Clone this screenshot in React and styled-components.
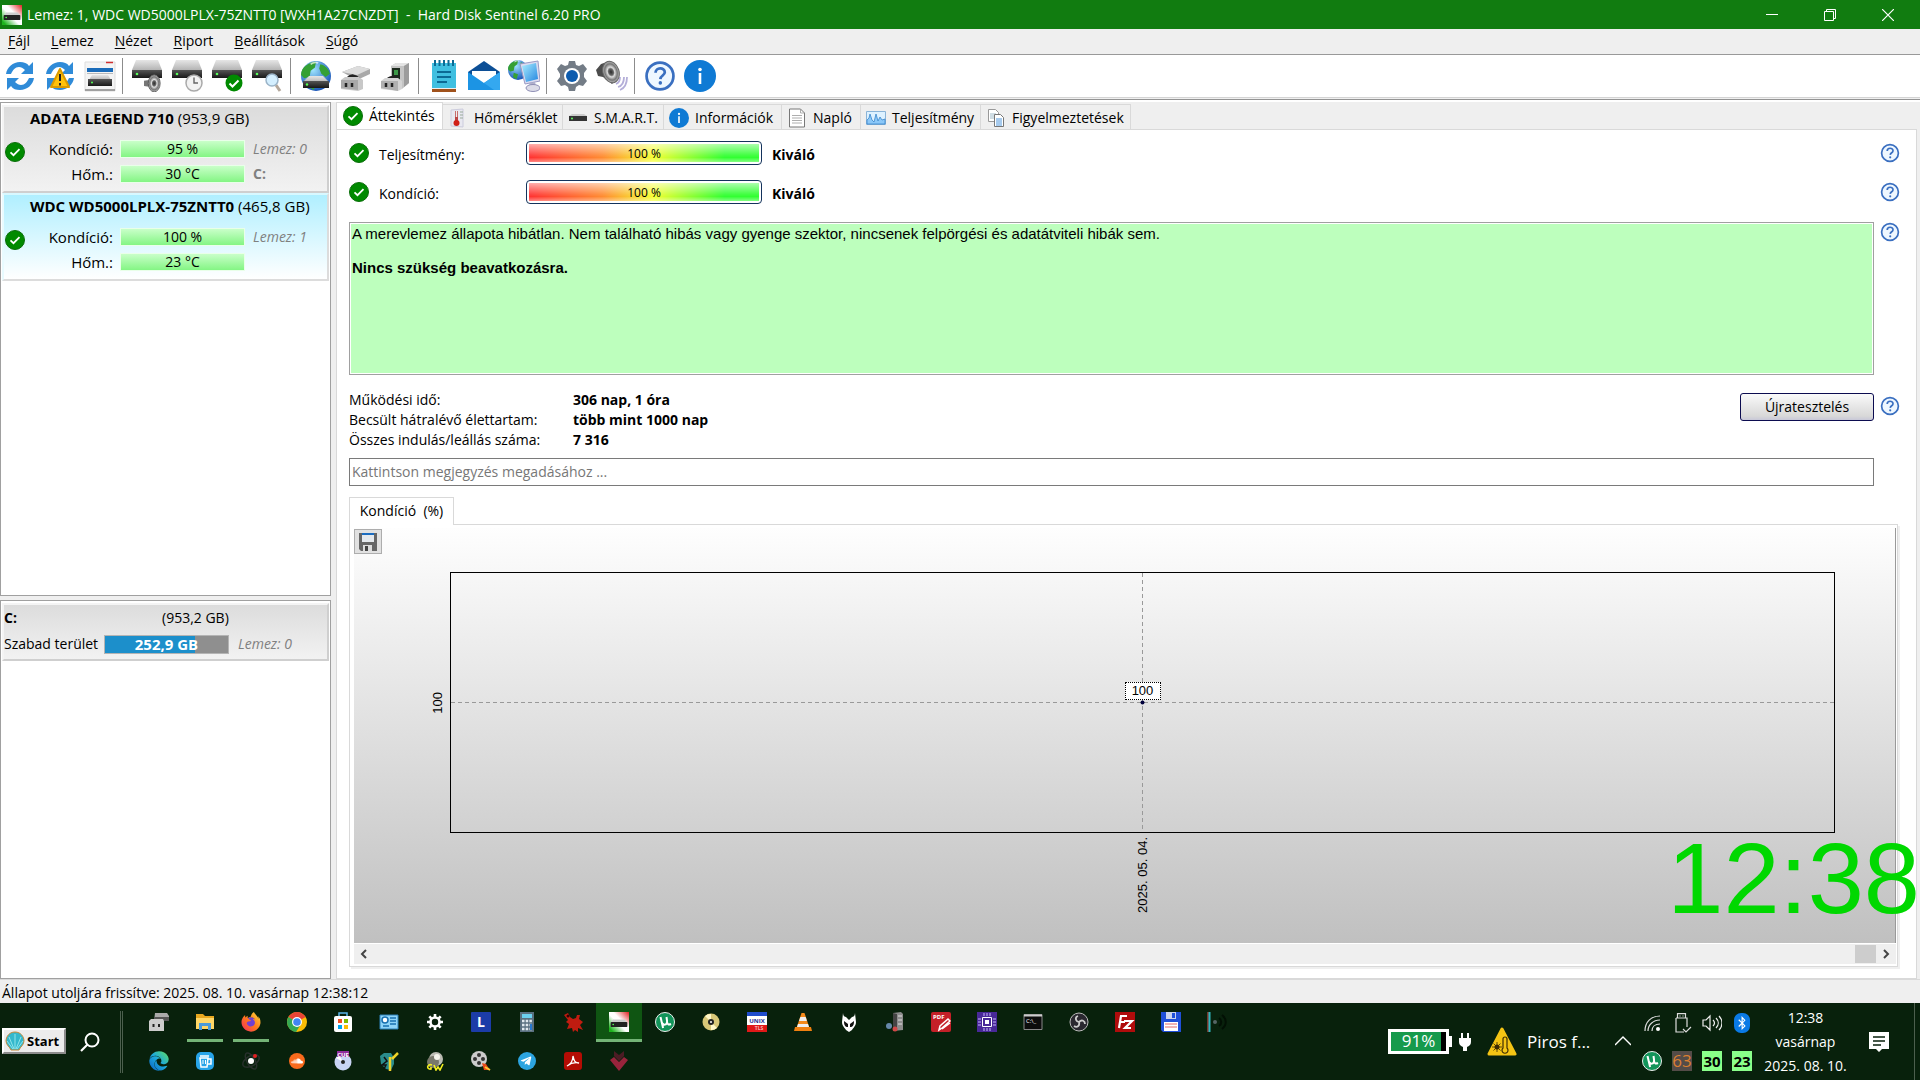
import React from 'react';
import styled, { createGlobalStyle, css } from 'styled-components';
import { FaBluetoothB, FaFirefoxBrowser, FaEdge, FaSoundcloud, FaTelegramPlane } from 'react-icons/fa';

const GlobalStyle = createGlobalStyle`
  * {
    box-sizing: border-box;
  }
  body {
    margin: 0;
    overflow: hidden;
    background: #efefef;
    color: #000;
    font-family: 'Open Sans', 'Noto Sans', sans-serif;
    font-size: 14px;
    line-height: 20px;
  }
  button, input {
    font: inherit;
    color: inherit;
    border: 0;
    margin: 0;
    padding: 0;
    background: none;
  }
  svg {
    display: block;
    flex: none;
  }
`;

const Window = styled.div`
  display: flex;
  flex-direction: column;
  min-height: 100vh;
`;

/* ---------- title, menu, toolbar ---------- */

const TitleBar = styled.header`
  display: flex;
  align-items: center;
  height: 29px;
  padding: 0 6px 0 2px;
  gap: 5px;
  background: #117c10;
  color: #fff;
`;

const Title = styled.h1`
  flex: 1;
  margin: 0;
  font-size: 14px;
  font-weight: 400;
  white-space: pre;
`;

const CaptionButton = styled.button`
  display: flex;
  align-items: center;
  justify-content: center;
  width: 53px;
  height: 29px;
`;

const MenuBar = styled.nav`
  display: flex;
  align-items: flex-start;
  height: 26px;
  padding: 2px 8px 0;
  gap: 21px;
  border-bottom: 1px solid #999;

  u {
    text-underline-offset: 2px;
  }
`;

const Toolbar = styled.div`
  display: flex;
  align-items: center;
  height: 43px;
  background: #fff;
  border-bottom: 1px solid #d4d4d4;
`;

const ToolbarEdge = styled.div`
  height: 3px;
  margin-top: 1px;
  border-top: 1px solid #949494;
  border-bottom: 2px solid #fff;
`;

const ToolButton = styled.button`
  display: flex;
  align-items: center;
  justify-content: center;
  width: 40px;
  height: 40px;
`;

const ToolSeparator = styled.span`
  width: 1px;
  height: 36px;
  margin: 0 5px 0 2px;
  background: #8c8c8c;
`;

/* ---------- left column ---------- */

const Main = styled.main`
  display: flex;
  flex: 1;
  gap: 5px;
`;

const Sidebar = styled.aside`
  display: flex;
  flex-direction: column;
  gap: 4px;
  width: 331px;
  flex: none;
`;

const SidePanel = styled.section`
  flex: ${({ $height }) => ($height ? `0 0 ${$height}px` : 1)};
  padding: 2px 1px;
  background: #fff;
  border: 1px solid #a0a0a0;
`;

const Card = styled.article`
  display: grid;
  grid-template-columns: 21px 81px 125px 1fr;
  grid-template-rows: 22px 7px 25px 25px;
  align-items: center;
  column-gap: 7px;
  height: 88px;
  border: 2px solid;
  border-color: #f4f4f4 #cfcfcf #cfcfcf #f4f4f4;
  background: linear-gradient(#dcdcdc, #f2f2f2);

  ${({ $selected }) =>
    $selected &&
    css`
      background: linear-gradient(#b0efff, #fff);
      border-color: #d8f8ff #dcdcdc #dcdcdc #e8fbff;
    `}
`;

const CardTitle = styled.h2`
  grid-column: 1 / -1;
  margin: 0;
  padding-left: 26px;
  font-size: 15px;
  font-weight: 400;
  white-space: nowrap;
`;

const CardState = styled.div`
  grid-row: 3;
  grid-column: 1;
  padding: 6px 0 0 1px;
`;

const CardLabel = styled.span`
  grid-column: 2;
  grid-row: ${({ $row }) => $row};
  font-size: 15px;
  text-align: right;
`;

const LevelBar = styled.span`
  grid-column: 3;
  grid-row: ${({ $row }) => $row};
  height: 18px;
  border: 1px solid #e9ffe9;
  background: linear-gradient(#c9ffc9, #84f584);
  line-height: 16px;
  text-align: center;
`;

const Muted = styled.span`
  grid-column: -2;
  grid-row: ${({ $row }) => $row};
  padding-left: 1px;
  color: #808080;
  font-style: ${({ $bold }) => ($bold ? 'normal' : 'italic')};
  font-weight: ${({ $bold }) => ($bold ? 700 : 400)};
`;

const VolumeCard = styled.article`
  display: grid;
  grid-template-columns: 92px 125px 1fr;
  grid-template-rows: 25px 28px;
  align-items: center;
  column-gap: 8px;
  height: 58px;
  border: 2px solid;
  border-color: #f4f4f4 #cfcfcf #cfcfcf #f4f4f4;
  background: linear-gradient(#dcdcdc, #f2f2f2);
  white-space: nowrap;
`;

const VolumeSize = styled.span`
  grid-column: 2 / -1;
  padding-left: 58px;
`;

const SpaceBar = styled.span`
  height: 19px;
  border: 1px solid #b4b4b4;
  background: linear-gradient(90deg, #1c8fcb 73%, #8f8f8f 73%);
  color: #fff;
  font-size: 15px;
  font-weight: 700;
  line-height: 17px;
  text-align: center;
`;

/* ---------- right pane ---------- */

const Pane = styled.section`
  display: flex;
  flex-direction: column;
  flex: 1;
  min-width: 0;
  margin-right: 3px;
`;

const TabList = styled.div`
  display: flex;
  align-items: flex-end;
  height: 28px;
  margin-bottom: -1px;
`;

const Tab = styled.button`
  display: flex;
  align-items: center;
  gap: 6px;
  width: ${({ $width }) => $width}px;
  height: 26px;
  padding: 1px 0 0 5px;
  border: 1px solid #d9d9d9;
  border-left: 0;
  background: #efefef;
  white-space: nowrap;

  &[aria-selected='true'] {
    height: 28px;
    padding: 0 0 2px 6px;
    border-left: 1px solid #d9d9d9;
    border-bottom: 0;
    background: #fff;
  }
`;

const TabPage = styled.div`
  display: flex;
  flex-direction: column;
  flex: 1;
  padding: 11px 16px 11px 12px;
  border: 1px solid #d9d9d9;
  background: #fff;
`;

const Row = styled.div`
  display: flex;
  gap: 6px;
  align-items: ${({ $top }) => ($top ? 'flex-start' : 'center')};
  margin-bottom: ${({ $gap }) => $gap}px;
`;

const RatingLabel = styled.span`
  width: 145px;
  padding: 3px 0 0 4px;
`;

const RatingBar = styled.div`
  width: 236px;
  height: 24px;
  padding: 2px;
  border: 1px solid #14335c;
  border-radius: 4px;

  span {
    display: block;
    height: 18px;
    background:
      linear-gradient(rgba(255, 255, 255, 0.6), rgba(255, 255, 255, 0.1) 60%, rgba(255, 255, 255, 0) 75%, rgba(255, 255, 255, 0.4)),
      linear-gradient(90deg, #ff3232, #ff8c32 32%, #f5ff32 54%, #32ff32 85%);
    font-size: 12px;
    line-height: 19px;
    text-align: center;
  }
`;

const Rating = styled.strong`
  flex: 1;
  padding: 3px 0 0 4px;
`;

const HelpButton = styled.button`
  width: 20px;
  height: 20px;
`;

const StatusText = styled.div`
  flex: 1;
  height: 153px;
  padding: 2px;
  border: 1px solid #a0a0a0;
  outline: 1px solid #fff;
  outline-offset: -2px;
  background: #bdffbd;
  font-family: 'Liberation Sans', Arial, sans-serif;
  font-size: 15px;
  line-height: 17px;

  p {
    margin: 0 0 17px;
  }
`;

const Stats = styled.dl`
  display: grid;
  grid-template-columns: 224px 1fr;
  grid-auto-rows: 20px;
  flex: 1;
  margin: 0;
  white-space: nowrap;

  dd {
    margin: 0;
    font-weight: 700;
  }
`;

const RetestButton = styled.button`
  width: 134px;
  height: 28px;
  margin-top: 3px;
  border: 1px solid #0c0c50;
  border-radius: 3px;
  background: linear-gradient(#fafafa, #d8d8d8 85%, #c8c8d8);
`;

const HelpInset = styled.div`
  padding-top: 6px;
`;

const NoteInput = styled.input`
  height: 28px;
  margin: 0 26px 11px 0;
  padding: 0 2px 2px;
  border: 1px solid #7a7a7a;

  &::placeholder {
    color: #777;
    opacity: 1;
  }
`;

const ChartTab = styled.button`
  position: relative;
  align-self: flex-start;
  height: 28px;
  width: 105px;
  margin-bottom: -1px;
  padding-bottom: 2px;
  border: 1px solid #d9d9d9;
  border-bottom: 0;
  background: #fff;
  white-space: pre;
`;

const ChartPanel = styled.div`
  display: flex;
  flex-direction: column;
  flex: 1;
  margin-right: 2px;
  padding: 3px 1px 2px 4px;
  border: 1px solid #d9d9d9;
  box-shadow: 2px 2px 0 #efefef;
`;

const Chart = styled.div`
  display: grid;
  grid-template-columns: 96px 1fr 60px;
  grid-template-rows: 44px 1fr 110px;
  flex: 1;
  border-right: 1px solid #999;
  background: linear-gradient(#fefefe, #c0c0c0);
  font-family: 'Liberation Sans', Arial, sans-serif;
  font-size: 13px;
  line-height: 16px;
`;

const SaveButton = styled.button`
  display: flex;
  align-items: center;
  justify-content: center;
  grid-column: 1 / -1;
  width: 28px;
  height: 25px;
  margin-top: 1px;
  border: 1px solid #adadad;
  background: #e1e1e1;
`;

const AxisLabel = styled.span`
  writing-mode: vertical-rl;
  transform: rotate(180deg);
  justify-self: ${({ $end }) => ($end ? 'end' : 'center')};
  align-self: ${({ $end }) => ($end ? 'center' : 'start')};
  margin: ${({ $end }) => ($end ? '0 4px 0 0' : '4px 0 0')};
`;

const Plot = styled.div`
  position: relative;
  display: flex;
  align-items: center;
  justify-content: center;
  border: 1px solid #000;

  > svg {
    position: absolute;
    inset: 0;
    overflow: visible;
  }
`;

const PointLabel = styled.span`
  position: relative;
  width: 36px;
  height: 18px;
  margin-bottom: 24px;
  border: 1px dotted #000;
  background: #fff;
  text-align: center;
`;

const ScrollBar = styled.div`
  display: flex;
  align-items: center;
  justify-content: space-between;
  height: 20px;
  margin-top: 1px;
  background: #efefef;
`;

const ScrollEnd = styled.div`
  display: flex;
  height: 18px;
`;

const ScrollButton = styled.button`
  display: flex;
  align-items: center;
  justify-content: center;
  width: 20px;
  height: 18px;
`;

const ScrollThumb = styled.div`
  width: 21px;
  background: #cdcdcd;
`;

const StatusBar = styled.footer`
  height: 24px;
  padding: 3px 2px 0;
  border-top: 1px solid #d9d9d9;
`;

const DesktopClock = styled.time`
  position: absolute;
  right: 0;
  bottom: 151px;
  color: #00d800;
  font: 101px/102px 'Liberation Sans', Arial, sans-serif;
`;

/* ---------- taskbar ---------- */

const Taskbar = styled.div`
  display: flex;
  align-items: center;
  height: 77px;
  background: #08210c;
  color: #fff;
`;

const StartButton = styled.button`
  display: flex;
  align-items: center;
  gap: 2px;
  width: 64px;
  height: 26px;
  margin: 0 0 2px 2px;
  padding-left: 1px;
  border: 2px solid;
  border-color: #fff #8c8c8c #8c8c8c #fff;
  background: #ececec;
  color: #000;
  font-size: 13px;
  font-weight: 700;
`;

const SearchButton = styled.button`
  margin: 0 20px 0 14px;
`;

const Grip = styled.span`
  width: 3px;
  height: 62px;
  margin-right: 13px;
  border: solid #4c5f4e;
  border-width: 0 1px;
`;

const Apps = styled.div`
  flex: 1;
  align-self: stretch;
`;

const AppRow = styled.div`
  display: flex;
  height: 39px;
`;

const AppButton = styled.button`
  display: flex;
  align-items: center;
  justify-content: center;
  width: 46px;
  height: 39px;
  padding-top: 2px;
  border-bottom: 3px solid transparent;

  ${({ $state }) =>
    $state === 'open' &&
    css`
      width: 36px;
      margin: 0 5px;
      border-color: #74b477;
    `}
  ${({ $state }) =>
    $state === 'active' &&
    css`
      background: #0f5512;
      border-color: #74b477;
    `}
`;

const Battery = styled.div`
  display: flex;
  justify-content: center;
  width: 61px;
  height: 25px;
  border: 3px solid #fff;
  background: linear-gradient(90deg, #169a4c 90%, #000 90%);
  font-size: 17px;
  line-height: 18px;
`;

const BatteryTip = styled.span`
  width: 3px;
  height: 11px;
  background: #fff;
`;

const Weather = styled.button`
  display: flex;
  align-items: center;
  gap: 10px;
  width: 128px;
  margin-left: 16px;
  font-size: 17px;
  white-space: nowrap;
`;

const TrayGrid = styled.div`
  display: grid;
  grid-template-columns: repeat(4, 30px);
  grid-template-rows: 38px 38px;
  place-items: center;
  margin-left: 6px;
`;

const TrayNumber = styled.span`
  width: 20px;
  height: 20px;
  background: ${({ $hot }) => ($hot ? '#544c48' : '#8aff8a')};
  color: ${({ $hot }) => ($hot ? '#dc8030' : '#000')};
  font-size: ${({ $hot }) => ($hot ? 17 : 15)}px;
  font-weight: ${({ $hot }) => ($hot ? 400 : 700)};
  text-align: center;
`;

const DateTime = styled.time`
  width: 97px;
  margin-right: 15px;
  line-height: 24px;
  text-align: center;
`;

const NoticeButton = styled.button`
  margin-right: 25px;
`;

const ShowDesktop = styled.button`
  align-self: stretch;
  width: 6px;
  border-left: 1px solid #4c5f4e;
`;

/* ---------- icons ---------- */

const Svg = ({ size = 32, box = 32, children, ...rest }) => (
  <svg width={size} height={size} viewBox={`0 0 ${box} ${box}`} fill="none" aria-hidden="true" {...rest}>
    {children}
  </svg>
);

const DefsSvg = styled.svg`
  position: absolute;
`;

const Gradients = () => (
  <DefsSvg width="0" height="0" aria-hidden="true">
    <defs>
      <linearGradient id="metal" x1="0" y1="0" x2="0" y2="1">
        <stop offset="0" stopColor="#e6e6e6" />
        <stop offset="1" stopColor="#b4b4b4" />
      </linearGradient>
      <linearGradient id="dark" x1="0" y1="0" x2="0" y2="1">
        <stop offset="0" stopColor="#555" />
        <stop offset="1" stopColor="#181818" />
      </linearGradient>
      <radialGradient id="ocean" cx=".4" cy=".3" r=".7">
        <stop offset="0" stopColor="#9ee4ff" />
        <stop offset="1" stopColor="#1a56b8" />
      </radialGradient>
      <linearGradient id="sky" x1="0" y1="0" x2="1" y2="1">
        <stop offset="0" stopColor="#aef" />
        <stop offset="1" stopColor="#2486e0" />
      </linearGradient>
      <linearGradient id="flag" x1="0" y1="1" x2="1" y2="0">
        <stop offset=".1" stopColor="#1eb41e" />
        <stop offset=".45" stopColor="#fff" />
        <stop offset=".6" stopColor="#fff" />
        <stop offset="1" stopColor="#e02020" />
      </linearGradient>
      <radialGradient id="speaker">
        <stop offset="0" stopColor="#2a2a2a" />
        <stop offset=".3" stopColor="#666" />
        <stop offset=".45" stopColor="#ddd" />
        <stop offset=".75" stopColor="#777" />
        <stop offset="1" stopColor="#bbb" />
      </radialGradient>
      <linearGradient id="fire" x1="0" y1="1" x2="1" y2="0">
        <stop offset="0" stopColor="#f02860" />
        <stop offset=".5" stopColor="#ff7a1a" />
        <stop offset="1" stopColor="#ffe040" />
      </linearGradient>
      <linearGradient id="edge" x1="0" y1="1" x2="1" y2="0">
        <stop offset="0" stopColor="#0a62c4" />
        <stop offset=".5" stopColor="#1ca8dc" />
        <stop offset="1" stopColor="#60e060" />
      </linearGradient>
    </defs>
  </DefsSvg>
);

const DriveShape = ({ transform }) => (
  <g transform={transform}>
    <path d="M4 0h22l4 10H0z" fill="url(#metal)" />
    <path d="M0 10h30v8H0z" fill="url(#dark)" />
    <circle cx="5" cy="14" r="1.3" fill="#5dff5d" />
  </g>
);

const SentinelIcon = ({ size = 20 }) => (
  <Svg size={size} box={24}>
    <path d="M0 0h24v24H0z" fill="url(#flag)" />
    <path d="M5 9h14l3 4H2z" fill="#ccc" />
    <rect x="2" y="12" width="20" height="6" rx="1" fill="#222" />
    <circle cx="5" cy="15" r="1" fill="#5f5" />
  </Svg>
);

const CheckIcon = ({ size = 20 }) => (
  <Svg size={size} box={20}>
    <circle cx="10" cy="10" r="9.5" fill="#008a00" stroke="#0a6e0a" />
    <path d="M5.5 10.3l3 2.9 6-6" stroke="#fff" strokeWidth="1.8" />
  </Svg>
);

const InfoIcon = ({ size = 32 }) => (
  <Svg size={size}>
    <circle cx="16" cy="16" r="16" fill="#0f7ad4" />
    <circle cx="16" cy="9.5" r="1.8" fill="#fff" />
    <path d="M16 13v11" stroke="#fff" strokeWidth="2.6" />
  </Svg>
);

const QuestionIcon = ({ size = 20 }) => (
  <Svg size={size} box={20}>
    <circle cx="10" cy="10" r="8.4" fill="#eef7ff" stroke="#3a6fc0" strokeWidth="1.7" />
    <path d="M7.2 8c0-3.6 5.8-3.6 5.8-.3 0 2-2.6 2-2.8 4.2" stroke="#3a6fc0" strokeWidth="1.7" />
    <circle cx="10.2" cy="14.3" r="1.1" fill="#3a6fc0" />
  </Svg>
);

const ARROW = 'M2 14C3 7 9 2 16 2c4 0 7 1 9 4l4-4v12H17l4-4c-2-2-4-3-6-3-4 0-6 3-8 7z';

const RefreshArrows = () => (
  <>
    <path d={ARROW} fill="#2f8bd8" />
    <path d={ARROW} fill="#2f8bd8" transform="rotate(180 16 16)" />
  </>
);

const RefreshIcon = () => (
  <Svg>
    <RefreshArrows />
  </Svg>
);

const RefreshWarnIcon = () => (
  <Svg>
    <RefreshArrows />
    <path d="M16 9L25 27H7z" fill="#ffc20a" stroke="#d99a00" strokeLinejoin="round" strokeWidth="2" />
    <path d="M16 14v7M16 23v2.4" stroke="#222" strokeWidth="2" />
  </Svg>
);

const ReportIcon = () => (
  <Svg>
    <path d="M1 2h30v29H1z" fill="#f4f4f4" stroke="#ddd" />
    <path d="M22 2.500h7" stroke="#d03030" strokeWidth="1.500" />
    <path d="M3 10h26" stroke="#1a6cba" strokeWidth="4" />
    <path d="M3 13.500h26" stroke="#bbb" />
    <path d="M8 15h16l3 5H5z" fill="url(#metal)" />
    <path d="M4 19h24v7H4z" fill="url(#dark)" />
    <circle cx="8" cy="22.500" r="1" fill="#5f5" />
    <path d="M1 30h30" stroke="#888" strokeWidth="1.500" />
  </Svg>
);

const SpeakerShape = ({ transform }) => (
  <g transform={transform}>
    <path d="M0 8l6-1 5-6v20l-5-6-6-1z" fill="#777" />
    <ellipse cx="12" cy="11" rx="7" ry="10" fill="url(#speaker)" stroke="#555" />
  </g>
);

const DriveSoundIcon = () => (
  <Svg>
    <DriveShape />
    <SpeakerShape transform="translate(12 14) scale(.85)" />
  </Svg>
);

const DriveClockIcon = () => (
  <Svg>
    <DriveShape />
    <circle cx="22" cy="23" r="8" fill="#f2f2f2" stroke="#aaa" strokeWidth="1.500" />
    <path d="M22 17.500V23h4" stroke="#666" strokeWidth="1.400" />
  </Svg>
);

const DriveCheckIcon = () => (
  <Svg>
    <DriveShape />
    <circle cx="22" cy="23" r="8.500" fill="#008a00" />
    <path d="M17.500 23.500l3 3 6-6" stroke="#fff" strokeWidth="2" />
  </Svg>
);

const DriveSearchIcon = () => (
  <Svg>
    <DriveShape />
    <path d="M24 25l4 6" stroke="#b4a89c" strokeWidth="3" />
    <circle cx="20" cy="20" r="6" fill="#d4efff" stroke="#9bb4c8" strokeWidth="1.500" />
  </Svg>
);

const GlobeShape = ({ cx = 16, cy = 15, r = 14 }) => (
  <g transform={`translate(${cx - r} ${cy - r}) scale(${r / 14})`}>
    <circle cx="14" cy="14" r="14" fill="url(#ocean)" />
    <path d="M5 4c4-3 8-4 9-3l-1 5-4 3-1 6-5 1-3-3c0-4 2-7 5-9zM18 3c5 1 8 5 9 9l-4 3-4-3-2-5zM8 18l6 2-2 7-5-3z" fill="#35a034" />
    <path d="M9 3c3-2 6-2 7-1" stroke="#fff" strokeWidth="1.500" opacity=".7" />
  </g>
);

const GlobeDriveIcon = () => (
  <Svg>
    <GlobeShape cx={16} cy={16} r={15} />
    <path d="M9 16h14l6 6H3z" fill="url(#metal)" />
    <path d="M3 21h26v7H3z" fill="url(#dark)" />
    <circle cx="7" cy="24.500" r="1.200" fill="#5f5" />
  </Svg>
);

const DriveDockIcon = () => (
  <Svg>
    <path d="M2 12L18 6l12 3v5l-13 6z" fill="#a9a9a9" />
    <path d="M2 12L18 6l12 3-13 6z" fill="#ddd" />
    <path d="M8 18c3-3 7-3 11 1" stroke="#222" strokeWidth="3" />
    <path d="M1 20l4-3h14l4 3v9l-5 2-17-2z" fill="#c8c8c8" />
    <path d="M1 20h17v10L1 28z" fill="#a8a8a8" />
    <path d="M6 23v4M12 23v4" stroke="#222" strokeWidth="2.500" />
  </Svg>
);

const DriveStandIcon = () => (
  <Svg>
    <path d="M11 6l5-3h13v20l-7 6H11z" fill="#c4c4c4" />
    <path d="M11 6l5-3h13l-5 3z" fill="#e4e4e4" />
    <path d="M24 6l5-3v20l-5 4z" fill="#9c9c9c" />
    <path d="M12 8h8v12h-8z" fill="#1c2a1e" />
    <path d="M14 10h4v5h-4z" fill="#3c9a48" />
    <path d="M7 20c1-3 5-4 9-2" stroke="#222" strokeWidth="2" />
    <path d="M1 21l4-3h13l4 3v8l-4 2-17-2z" fill="#d4d4d4" />
    <path d="M1 21h17v10L1 28z" fill="#b0b0b0" />
    <path d="M6 23v4M12 23v4" stroke="#222" strokeWidth="2.500" />
  </Svg>
);

const NotepadIcon = () => (
  <Svg>
    <path d="M4 3h24v26H4z" fill="#40bfe0" />
    <path d="M4 29h24v3H4z" fill="#a0521c" />
    <path d="M4 28.500h24" stroke="#eee" />
    <path d="M7 0v6M11.500 0v6M16 0v6M20.500 0v6M25 0v6" stroke="#0b6a94" strokeWidth="2" />
    <path d="M9 12h14M9 17h14M9 22h10" stroke="#0b6a94" strokeWidth="2" />
  </Svg>
);

const MailIcon = () => (
  <Svg>
    <path d="M0 12L16 1l16 11v3H0z" fill="#0d4f96" />
    <path d="M4 11h24v8l-12 6-12-6z" fill="#fff" />
    <path d="M0 12l16 11 16-11v18H0z" fill="#1c94e4" />
    <path d="M16 23L32 12v18H26z" fill="#34a8f0" />
  </Svg>
);

const NetworkIcon = () => (
  <Svg>
    <GlobeShape cx={10} cy={10} r={10} />
    <path d="M12 4l18-3 2 20-15 3z" fill="#dcdcf0" stroke="#9a9ac4" />
    <path d="M14 6l14-3 2 16-12 3z" fill="url(#sky)" />
    <path d="M21 23l6-1 1 4h-6z" fill="#b0b0cc" />
    <ellipse cx="25" cy="28" rx="7" ry="3.500" fill="#dcdce8" stroke="#8e8eb4" />
  </Svg>
);

const GearIcon = () => (
  <Svg>
    <path
      d="M13 1h6l1 4 3 1 4-2 4 5-3 4v4l3 4-4 5-4-1-3 2-1 4h-6l-1-4-3-2-4 1-4-5 3-4v-3L1 9l4-5 4 2 3-1z"
      fill="#737c86"
    />
    <circle cx="16" cy="16" r="8" fill="#fff" />
    <circle cx="16" cy="16" r="6" fill="#0d5cae" />
  </Svg>
);

const SoundIcon = () => (
  <Svg>
    <path d="M22 27c4-1 6-5 6-10M24 30c5-2 7-7 7-13M20 24c3-1 4-3 4-7" stroke="#b4aed8" strokeWidth="1.800" />
    <path d="M0 10l5-6 9-3 5 20-3 3-9-7-5-1z" fill="#4c4c4c" />
    <ellipse cx="15" cy="12" rx="8" ry="11" transform="rotate(-18 15 12)" fill="url(#speaker)" stroke="#666" />
  </Svg>
);

const ThermometerIcon = () => (
  <Svg size={20} box={20}>
    <path d="M3 2l12-1v18l-12-1z" fill="#e8e8f0" stroke="#ccd" />
    <path d="M8.500 3v11" stroke="#b44" strokeWidth="3" />
    <path d="M8.500 3v6" stroke="#eee" strokeWidth="1.500" />
    <circle cx="8.500" cy="15" r="3" fill="#d02018" />
    <path d="M12 4h3M12 7h3M12 10h3" stroke="#9a9" />
  </Svg>
);

const SmartIcon = () => (
  <Svg size={20} box={20}>
    <path d="M4 6h12l3 2H1z" fill="#ccc" />
    <rect x="1" y="8" width="18" height="5" fill="#333" />
    <circle cx="4" cy="10.500" r="1" fill="#6f6" />
  </Svg>
);

const PageIcon = () => (
  <Svg size={20} box={20}>
    <path d="M2.500 1h11l4 4v14h-15z" fill="#fff" stroke="#777" />
    <path d="M13.500 1v4h4M5 7.500h10M5 10h10M5 12.500h10M5 15h10" stroke="#999" strokeWidth=".8" />
  </Svg>
);

const WaveIcon = () => (
  <Svg size={20} box={20}>
    <path d="M.5 3.500h19v13H.5z" fill="#ddf1ff" stroke="#8ab4d8" />
    <path d="M1 16v-4l2-2 1-4 2 6 2 2 2-8 2 7 2-4 2 3 3-1v5z" fill="#8cc8f8" stroke="#3a86cc" strokeWidth=".8" />
  </Svg>
);

const PagesIcon = () => (
  <Svg size={20} box={20}>
    <path d="M2.500 1.500h7l3 3v9h-10z" fill="#fff" stroke="#999" />
    <path d="M4 6h6M4 8h6M4 10h6" stroke="#8ab" strokeWidth=".8" />
    <path d="M8.500 6.500h6l3 3v9h-9z" fill="#fff" stroke="#777" />
    <path d="M10 11h6M10 13h6M10 15h6M10 17h6" stroke="#3a8ad8" strokeWidth=".9" />
  </Svg>
);

const FloppyIcon = () => (
  <Svg size={18} box={18}>
    <path d="M0 0h18v18H2l-2-2z" fill="#666" />
    <path d="M3 0h12v9H3z" fill="#e4e8ec" />
    <path d="M3 0h12v2H3z" fill="#1a6cc0" />
    <path d="M4 12h9v6H4z" fill="#ddd" />
    <path d="M6 13h3v5H6z" fill="#444" />
  </Svg>
);

const UTorrentIcon = () => (
  <Svg size={20} box={20}>
    <circle cx="10" cy="10" r="9.500" fill="#12945a" stroke="#eee" />
    <path d="M5.500 5l2.600 11M6.300 8.500c1 6 6.500 5 5.700 0L11.500 5M12 10c.5 3 2 3 4 2" stroke="#fff" strokeWidth="2" />
  </Svg>
);

const Tile = ({ fill, text, color = '#fff', size = 12 }) => (
  <Svg size={20} box={20}>
    <rect width="20" height="20" rx="1" fill={fill} />
    <text x="10" y="15" textAnchor="middle" fontSize={size} fontWeight="700" fill={color}>
      {text}
    </text>
  </Svg>
);

const Icon20 = ({ children }) => (
  <Svg size={20} box={20}>
    {children}
  </Svg>
);

const PlugIcon = styled.svg`
  margin-left: 7px;
`;

/* ---------- data ---------- */

const MENU = ['Fájl', 'Lemez', 'Nézet', 'Riport', 'Beállítások', 'Súgó'];

const TOOL_GROUPS = [
  [
    ['Frissítés', <RefreshIcon />],
    ['Figyelmeztetés', <RefreshWarnIcon />],
    ['Riport', <ReportIcon />],
  ],
  [
    ['Hang', <DriveSoundIcon />],
    ['Időzítés', <DriveClockIcon />],
    ['Teszt', <DriveCheckIcon />],
    ['Keresés', <DriveSearchIcon />],
  ],
  [
    ['Hálózati lemez', <GlobeDriveIcon />],
    ['Dokkoló', <DriveDockIcon />],
    ['Állvány', <DriveStandIcon />],
  ],
  [
    ['Jegyzet', <NotepadIcon />],
    ['Levél', <MailIcon />],
    ['Hálózat', <NetworkIcon />],
  ],
  [
    ['Beállítások', <GearIcon />],
    ['Hangok', <SoundIcon />],
  ],
  [
    ['Súgó', <QuestionIcon size={32} />],
    ['Névjegy', <InfoIcon />],
  ],
];

const TABS = [
  ['Áttekintés', 107, <CheckIcon />],
  ['Hőmérséklet', 120, <ThermometerIcon />],
  ['S.M.A.R.T.', 101, <SmartIcon />],
  ['Információk', 118, <InfoIcon size={20} />],
  ['Napló', 79, <PageIcon />],
  ['Teljesítmény', 120, <WaveIcon />],
  ['Figyelmeztetések', 150, <PagesIcon />],
];

const DISKS = [
  { name: 'ADATA LEGEND 710', size: '953,9 GB', health: '95 %', temp: '30 °C', index: 0, volume: 'C:' },
  { name: 'WDC WD5000LPLX-75ZNTT0', size: '465,8 GB', health: '100 %', temp: '23 °C', index: 1, selected: true },
];

const RATINGS = [
  ['Teljesítmény:', '100 %', 15],
  ['Kondíció:', '100 %', 18],
];

const TOP_APPS = [
  ['Dokk', <Icon20><path d="M6 1h12l2 3v5H5z" fill="#aaa" /><path d="M5 5h15v4H5z" fill="#555" /><path d="M0 9l2-2h12l1 2v10H0z" fill="#ccc" /><path d="M4.500 12v3M10 12v3" stroke="#222" strokeWidth="2" /></Icon20>],
  ['Fájlkezelő', <Icon20><path d="M1 2h7l2 2h9v13H1z" fill="#e8a820" /><path d="M1 6h18v11H1z" fill="#ffd766" /><path d="M4 18v-7h12v7h-3v-4H7v4z" fill="#4a9ad8" /></Icon20>, 'open'],
  ['Firefox', <Icon20><circle cx="10" cy="11" r="6" fill="#7040d0" /><g transform="scale(.039)" fill="url(#fire)"><FaFirefoxBrowser size={512} fill="url(#fire)" /></g></Icon20>, 'open'],
  ['Chrome', <Icon20><circle cx="10" cy="10" r="10" fill="#fbbc05" /><path d="M10 10L1.400 5a10 10 0 0 1 17.200 0z" fill="#ea4335" /><path d="M10 10L1.400 5A10 10 0 0 0 9 20l5-8z" fill="#34a853" /><circle cx="10" cy="10" r="5" fill="#fff" /><circle cx="10" cy="10" r="3.800" fill="#4285f4" /></Icon20>],
  ['Store', <Icon20><path d="M6 5V1h8v4" stroke="#5ab4e8" strokeWidth="1.500" /><rect x="1" y="4" width="18" height="16" rx="2" fill="#fff" /><path d="M5 7h4v4H5z" fill="#f25022" /><path d="M11 7h4v4h-4z" fill="#7fba00" /><path d="M5 13h4v4H5z" fill="#00a4ef" /><path d="M11 13h4v4h-4z" fill="#ffb900" /></Icon20>],
  ['Vezérlőpult', <Icon20><path d="M1 3h18v14H1z" fill="#8ed4f8" stroke="#2a80b8" /><circle cx="6" cy="8" r="3" fill="#fff" stroke="#1870b0" strokeWidth="1.500" /><path d="M11 6h6M11 9h6M11 12h6M4 14h6" stroke="#1870b0" strokeWidth="1.500" /></Icon20>],
  ['Gépház', <Icon20><circle cx="10" cy="10" r="4.500" stroke="#fff" strokeWidth="2.600" /><path d="M10 2v3M10 15v3M2 10h3M15 10h3M4.300 4.300l2 2M13.700 13.700l2 2M15.700 4.300l-2 2M6.300 13.700l-2 2" stroke="#fff" strokeWidth="2.600" /></Icon20>],
  ['L', <Tile fill="#1c3ca8" text="L" size={14} />],
  ['Számológép', <Icon20><path d="M3 0h14v20H3z" fill="#5a7080" /><path d="M5 2h10v4H5z" fill="#6cd0f0" /><path d="M5 9h10M5 13h10M5 17h10" stroke="#e0e8ee" strokeWidth="2.500" strokeDasharray="2.500 1.200" /><path d="M14 12v6" stroke="#2878d0" strokeWidth="2" /></Icon20>],
  ['IrfanView', <Icon20><path d="M1 3l4-2 2 4 3 2 3-1 1-3 3 0-1 4 4 3-3 3 3 5-5-2 0 4-3-2-2 2-1-4-5 1 2-5-3-2 2-2z" fill="#c01c10" /><circle cx="5" cy="4" r="1.500" fill="#300" /></Icon20>],
  ['Hard Disk Sentinel', <SentinelIcon />, 'active'],
  ['uTorrent', <UTorrentIcon />],
  ['Lemez', <Icon20><circle cx="10" cy="10" r="8.500" fill="#d8c878" /><path d="M10 10L4 4a8 8 0 0 1 6-2z" fill="#fff8c8" /><path d="M10 10l6 6a8 8 0 0 1-6 2z" fill="#fff8c8" /><circle cx="10" cy="10" r="3" fill="#222" /><circle cx="10" cy="10" r="1" fill="#fff" /></Icon20>],
  ['Unix', <Icon20><path d="M0 0h20v20H0z" fill="#fff" /><path d="M0 0h20v4H0z" fill="#1e4ccc" /><path d="M0 13h20v7H0z" fill="#e01818" /><text x="10" y="11" textAnchor="middle" fontSize="6" fontWeight="700" fill="#1a2c90">UNIX</text><text x="12" y="18" textAnchor="middle" fontSize="5" fontWeight="700" fill="#f8b0b0">TLS</text></Icon20>],
  ['VLC', <Icon20><path d="M8.500 1h3l5 15h-13z" fill="#f58a1a" /><path d="M7.300 5h5.400l1.200 4H6z" fill="#eee" /><path d="M5 12h10l1 3H4z" fill="#eee" /><path d="M2 15h16l1 4H1z" fill="#f08010" /></Icon20>],
  ['foobar2000', <Icon20><path d="M4 1c0 3 2 4 3 4l3 3 3-3c1 0 3-1 3-4l1 9c0 4-3 6-4 8l-3 2-3-2c-1-2-4-4-4-8z" fill="#fff" /><path d="M5 9l4 3v3c-3 0-4-2-4-6zM15 9l-4 3v3c3 0 4-2 4-6z" fill="#111" /></Icon20>],
  ['Szerver', <Icon20><path d="M8 1l8-1 2 2v16l-10 1z" fill="#8c8c8c" /><path d="M8 1l4 1v17l-4-1z" fill="#444" /><path d="M13 4h4M13 8h4M13 12h4" stroke="#ddd" /><circle cx="4" cy="14" r="3" fill="#68a" /><circle cx="10" cy="17" r="2.500" fill="#d04848" /></Icon20>],
  ['PDF', <Icon20><rect width="20" height="20" rx="2" fill="#c42028" /><text x="2" y="7" fontSize="6" fontWeight="700" fill="#fff">PDF</text><path d="M8 18l1-4 8-7 2 2-8 7zM11 17l8-6" stroke="#fff" strokeWidth="1.500" /></Icon20>],
  ['CPU-Z', <Icon20><path d="M0 0h20v20H0z" fill="#482898" /><path d="M5.500 5.500h9v9h-9z" stroke="#fff" /><path d="M8 8h4v4H8z" fill="#fff" /><path d="M7 1v3M10 1v3M13 1v3M7 16v3M10 16v3M13 16v3M1 7h3M1 10h3M1 13h3M16 7h3M16 10h3M16 13h3" stroke="#c8b4ff" /></Icon20>],
  ['Parancssor', <Icon20><path d="M1 2.500h18v15H1z" fill="#0c0c0c" stroke="#888" /><path d="M1 3.500h18" stroke="#ccc" strokeWidth="2" /><text x="3" y="11" fontSize="6" fill="#fff">C:\_</text></Icon20>],
  ['OBS', <Icon20><circle cx="10" cy="10" r="9" fill="#2a2830" stroke="#bbb" /><path d="M10 10c-4-1-4-5-1-6M10 10c3-3 6-1 6 2M10 10c1 4-2 6-5 4" stroke="#ccc" strokeWidth="1.800" /></Icon20>],
  ['FileZilla', <Icon20><path d="M0 0h20v20H0z" fill="#b00c0c" /><path d="M12 4H6L4 16M5 10h5M9 9h8l-7 7h6" stroke="#fff" strokeWidth="2.200" /></Icon20>],
  ['Total Commander', <Icon20><path d="M0 0h20v20H2l-2-2z" fill="#2050d8" /><path d="M5 0h10v7H5z" fill="#ccd4ec" /><path d="M11 1h3v5h-3z" fill="#2050d8" /><path d="M3 10h14v9H3z" fill="#fff" /><path d="M4 12h12M4 15h12" stroke="#e06868" /></Icon20>],
  ['Hang', <Icon20><path d="M1 0v20" stroke="#e05050" /><path d="M2.500 0v20" stroke="#30b8c0" strokeWidth="2" /><circle cx="8" cy="10" r="2" fill="#566" /><path d="M12 6c3 2 3 6 0 8M15 3c5 4 5 10 0 14" stroke="#021004" strokeWidth="2" /></Icon20>],
];

const BOTTOM_APPS = [
  ['Edge', <FaEdge size={20} fill="url(#edge)" />],
  ['Kávé', <Icon20><rect x="1" y="1" width="18" height="18" rx="5" fill="#28a4e8" /><path d="M5 7h8l-1 9H6zM13 8h3v5h-3M5 5h9" stroke="#fff" strokeWidth="1.500" /><path d="M8 9v4M10.500 9v4" stroke="#fff" /></Icon20>],
  ['Atom', <Icon20><ellipse cx="10" cy="10" rx="9" ry="5" stroke="#28302c" strokeWidth="1.500" transform="rotate(-30 10 10)" /><ellipse cx="10" cy="10" rx="9" ry="4" stroke="#28302c" strokeWidth="1.500" transform="rotate(60 10 10)" /><circle cx="10" cy="10" r="3" fill="#fff" /><circle cx="14" cy="5" r="2" fill="#e02020" /></Icon20>],
  ['SoundCloud', <Icon20><circle cx="10" cy="10" r="8" fill="#f86a1c" /><FaSoundcloud x="4" y="4" size={12} color="#fff" /></Icon20>],
  ['Cue', <Icon20><circle cx="10" cy="11" r="8.500" fill="#c8d4f4" /><path d="M10 11l-7-4 3-3z" fill="#fff" /><circle cx="10" cy="11" r="2" fill="#222" /><path d="M4 0h12v6H4z" fill="#902c9c" /><text x="10" y="5.500" textAnchor="middle" fontSize="6" fontWeight="700" fill="#fff">CUE</text></Icon20>],
  ['Eszköz', <Icon20><path d="M1 5l4-3 7 0 3 5 0 6-3 6-5-1-5-5z" fill="#2a8c8c" /><path d="M11 20V6M13 8l6-6" stroke="#f0d428" strokeWidth="2.500" /><path d="M5 6l3 4-5 4 4 0-2 4" stroke="#111" strokeWidth="1.500" /></Icon20>],
  ['GoldWave', <Icon20><circle cx="11" cy="8" r="7" fill="#bcbcb4" /><circle cx="8" cy="11" r="6" fill="#78786c" /><circle cx="12" cy="6" r="3" fill="#f4f4ec" /><path d="M7 14c-5-2-6 5-1 4v-2M9 14l2 5 2-3 2 3 3-6" stroke="#f4f020" strokeWidth="1.600" /></Icon20>],
  ['Videó', <Icon20><circle cx="8" cy="8" r="8" fill="#ccc" /><circle cx="8" cy="4" r="2" fill="#333" /><circle cx="4" cy="8" r="2" fill="#333" /><circle cx="12" cy="8" r="2" fill="#333" /><circle cx="8" cy="12" r="2" fill="#333" /><path d="M11 12l4 1 4 6h-6z" fill="#e84818" /><path d="M14 16l5 3" stroke="#fc3" strokeWidth="2" /></Icon20>],
  ['Telegram', <Icon20><circle cx="10" cy="10" r="9" fill="#2ca4e0" /><FaTelegramPlane x="3" y="4" size={12} color="#fff" /></Icon20>],
  ['Acrobat', <Icon20><rect x="1" y="1" width="18" height="18" rx="3" fill="#b40c04" /><path d="M10 5c1 5 2 7 6 7-5-1-8 0-12 3 4-2 6-5 6-10z" stroke="#fff" strokeWidth="1.300" /></Icon20>],
  ['Nyíl', <Icon20><path d="M1 9l4-3 5 5 5-5 4 3-9 11z" fill="#98243c" /><path d="M5 0l5 4 5-4v5l-5 5-5-5z" fill="#4c1c24" /></Icon20>],
];

const renderApp = ([label, icon, state]) => (
  <AppButton key={label} $state={state} aria-label={label}>
    {icon}
  </AppButton>
);

const Help = () => (
  <HelpButton aria-label="Súgó">
    <QuestionIcon />
  </HelpButton>
);

const DiskCard = ({ disk }) => (
  <Card $selected={disk.selected}>
    <CardTitle>
      <strong>{disk.name}</strong> ({disk.size})
    </CardTitle>
    <CardState>
      <CheckIcon />
    </CardState>
    <CardLabel $row={3}>Kondíció:</CardLabel>
    <LevelBar $row={3}>{disk.health}</LevelBar>
    <Muted $row={3}>Lemez: {disk.index}</Muted>
    <CardLabel $row={4}>Hőm.:</CardLabel>
    <LevelBar $row={4}>{disk.temp}</LevelBar>
    {disk.volume && (
      <Muted $row={4} $bold>
        {disk.volume}
      </Muted>
    )}
  </Card>
);

const ConditionChart = () => (
  <ChartPanel>
    <Chart>
      <SaveButton aria-label="Mentés">
        <FloppyIcon />
      </SaveButton>
      <AxisLabel $end>100</AxisLabel>
      <Plot>
        <svg width="100%" height="100%">
          <line x1="50%" y1="0" x2="50%" y2="100%" stroke="#999" strokeDasharray="4 3" />
          <line x1="0" y1="50%" x2="100%" y2="50%" stroke="#999" strokeDasharray="4 3" />
          <circle cx="50%" cy="50%" r="2" fill="#00003c" />
        </svg>
        <PointLabel>100</PointLabel>
      </Plot>
      <span />
      <span />
      <AxisLabel>2025. 05. 04.</AxisLabel>
    </Chart>
    <ScrollBar>
      <ScrollButton aria-label="Balra">
        <Svg size={10} box={10}>
          <path d="M7 1L3 5l4 4" stroke="#444" strokeWidth="2" />
        </Svg>
      </ScrollButton>
      <ScrollEnd>
        <ScrollThumb />
        <ScrollButton aria-label="Jobbra">
          <Svg size={10} box={10}>
            <path d="M3 1l4 4-4 4" stroke="#444" strokeWidth="2" />
          </Svg>
        </ScrollButton>
      </ScrollEnd>
    </ScrollBar>
  </ChartPanel>
);

const App = () => {
  return (
    <Window>
      <GlobalStyle />
      <Gradients />
      <TitleBar>
        <SentinelIcon />
        <Title>{'Lemez: 1, WDC WD5000LPLX-75ZNTT0 [WXH1A27CNZDT]  -  Hard Disk Sentinel 6.20 PRO'}</Title>
        <CaptionButton aria-label="Kis méret">
          <Svg size={12} box={12}><path d="M0 5.500h12" stroke="#fff" /></Svg>
        </CaptionButton>
        <CaptionButton aria-label="Előző méret">
          <Svg size={12} box={12}><path d="M.5 2.500h9v9h-9zM2.500 2V.5h9v9H10" stroke="#fff" /></Svg>
        </CaptionButton>
        <CaptionButton aria-label="Bezárás">
          <Svg size={12} box={12}><path d="M0 0l12 12M12 0L0 12" stroke="#fff" strokeWidth="1.200" /></Svg>
        </CaptionButton>
      </TitleBar>
      <MenuBar>
        {MENU.map((item) => (
          <button key={item}>
            <u>{item[0]}</u>
            {item.slice(1)}
          </button>
        ))}
      </MenuBar>
      <Toolbar>
        {TOOL_GROUPS.map((group, i) => (
          <React.Fragment key={i}>
            {i > 0 && <ToolSeparator />}
            {group.map(([label, icon]) => (
              <ToolButton key={label} aria-label={label}>
                {icon}
              </ToolButton>
            ))}
          </React.Fragment>
        ))}
      </Toolbar>
      <ToolbarEdge />

      <Main>
        <Sidebar>
          <SidePanel>
            {DISKS.map((disk) => (
              <DiskCard key={disk.index} disk={disk} />
            ))}
          </SidePanel>
          <SidePanel $height={379}>
            <VolumeCard>
              <strong>C:</strong>
              <VolumeSize>(953,2 GB)</VolumeSize>
              <span>Szabad terület</span>
              <SpaceBar>252,9 GB</SpaceBar>
              <Muted>Lemez: 0</Muted>
            </VolumeCard>
          </SidePanel>
        </Sidebar>

        <Pane>
          <TabList role="tablist">
            {TABS.map(([label, width, icon], i) => (
              <Tab key={label} role="tab" aria-selected={i === 0} $width={width}>
                {icon}
                {label}
              </Tab>
            ))}
          </TabList>
          <TabPage>
            {RATINGS.map(([label, value, gap]) => (
              <Row key={label} $gap={gap}>
                <CheckIcon />
                <RatingLabel>{label}</RatingLabel>
                <RatingBar>
                  <span>{value}</span>
                </RatingBar>
                <Rating>Kiváló</Rating>
                <Help />
              </Row>
            ))}
            <Row $top $gap={15}>
              <StatusText>
                <p>
                  A merevlemez állapota hibátlan. Nem található hibás vagy gyenge szektor, nincsenek felpörgési és
                  adatátviteli hibák sem.
                </p>
                <strong>Nincs szükség beavatkozásra.</strong>
              </StatusText>
              <Help />
            </Row>
            <Row $top $gap={8}>
              <Stats>
                <dt>Működési idő:</dt>
                <dd>306 nap, 1 óra</dd>
                <dt>Becsült hátralévő élettartam:</dt>
                <dd>több mint 1000 nap</dd>
                <dt>Összes indulás/leállás száma:</dt>
                <dd>7 316</dd>
              </Stats>
              <RetestButton>Újratesztelés</RetestButton>
              <HelpInset>
                <Help />
              </HelpInset>
            </Row>
            <NoteInput aria-label="Megjegyzés" placeholder="Kattintson megjegyzés megadásához ..." />
            <ChartTab role="tab" aria-selected="true">{'Kondíció  (%)'}</ChartTab>
            <ConditionChart />
          </TabPage>
        </Pane>
      </Main>
      <StatusBar>Állapot utoljára frissítve: 2025. 08. 10. vasárnap 12:38:12</StatusBar>
      <DesktopClock>12:38</DesktopClock>

      <Taskbar>
        <StartButton>
          <Icon20>
            <path d="M10 1c6 0 9 5 9 9s-4 6-5 9H6c-1-3-5-5-5-9s3-9 9-9z" fill="#34b8cc" stroke="#c88838" />
            <path d="M10 18V3M9 18L4 6M11 18l5-12M8 18l-6-8M12 18l6-8" stroke="#a8f0f4" strokeWidth=".8" />
          </Icon20>
          Start
        </StartButton>
        <SearchButton aria-label="Keresés">
          <Icon20>
            <circle cx="12" cy="8" r="6.500" stroke="#fff" strokeWidth="2" />
            <path d="M7.500 12.500L1 19" stroke="#fff" strokeWidth="2.200" />
          </Icon20>
        </SearchButton>
        <Grip />
        <Apps>
          <AppRow>{TOP_APPS.map(renderApp)}</AppRow>
          <AppRow>{BOTTOM_APPS.map(renderApp)}</AppRow>
        </Apps>
        <Battery>91%</Battery>
        <BatteryTip />
        <PlugIcon width="12" height="20" viewBox="0 0 12 20" aria-hidden="true">
          <path d="M2 1h2v5h4V1h2v5h2v4c0 3-2 4-4 5v4H4v-4c-2-1-4-2-4-5V6h2z" fill="#fff" />
        </PlugIcon>
        <Weather>
          <Svg size={30} box={30}>
            <path d="M15 2l13 25H2z" fill="#f4c414" stroke="#f4c414" strokeWidth="3" strokeLinejoin="round" />
            <circle cx="10" cy="20" r="2.500" fill="#3c2c04" />
            <path d="M10 15v10M5 20h10M6.500 16.500l7 7M13.500 16.500l-7 7" stroke="#3c2c04" strokeWidth=".8" />
            <path d="M16 21v-9a2 2 0 0 1 4 0v9a3 3 0 1 1-4 0z" stroke="#3c2c04" strokeWidth="1.200" />
          </Svg>
          Piros f...
        </Weather>
        <Svg size={16} box={16}>
          <path d="M0 11l8-8 8 8" stroke="#fff" strokeWidth="1.400" />
        </Svg>
        <TrayGrid>
          <Icon20>
            <path d="M3 18C3 9 9 3 18 3M6 18c0-6 5-11 12-11M10 18c0-4 3-7 8-7" stroke="#ddd" strokeWidth="1.200" />
            <circle cx="16" cy="16" r="2" fill="#fff" />
          </Icon20>
          <Icon20>
            <path d="M5.500 5V.7h8V5M4 5h11v9M4 5v14h8M8 2.500v1M11 2.500v1M11 16l3 3 5-5" stroke="#ddd" strokeWidth="1.200" />
          </Icon20>
          <Icon20>
            <path d="M1 7h3l4-4v14l-4-4H1zM11 7c2 2 2 4 0 6M14 5c3 3 3 7 0 10M17 3c4 4 4 10 0 14" stroke="#eee" strokeWidth="1.200" />
          </Icon20>
          <Icon20>
            <rect x="2" width="16" height="20" rx="7" fill="#0a7ae6" />
            <FaBluetoothB x="3" y="3" size={14} color="#fff" />
          </Icon20>
          <UTorrentIcon />
          <TrayNumber $hot>63</TrayNumber>
          <TrayNumber>30</TrayNumber>
          <TrayNumber>23</TrayNumber>
        </TrayGrid>
        <DateTime>
          12:38
          <br />
          vasárnap
          <br />
          2025. 08. 10.
        </DateTime>
        <NoticeButton aria-label="Értesítések">
          <Icon20>
            <path d="M0 0h20v17h-7l-3 3-3-3H0z" fill="#fff" />
            <path d="M4 5h12M4 9h12M4 13h8" stroke="#08210c" strokeWidth="1.400" />
          </Icon20>
        </NoticeButton>
        <ShowDesktop aria-label="Asztal megjelenítése" />
      </Taskbar>
    </Window>
  );
};

export default App;
